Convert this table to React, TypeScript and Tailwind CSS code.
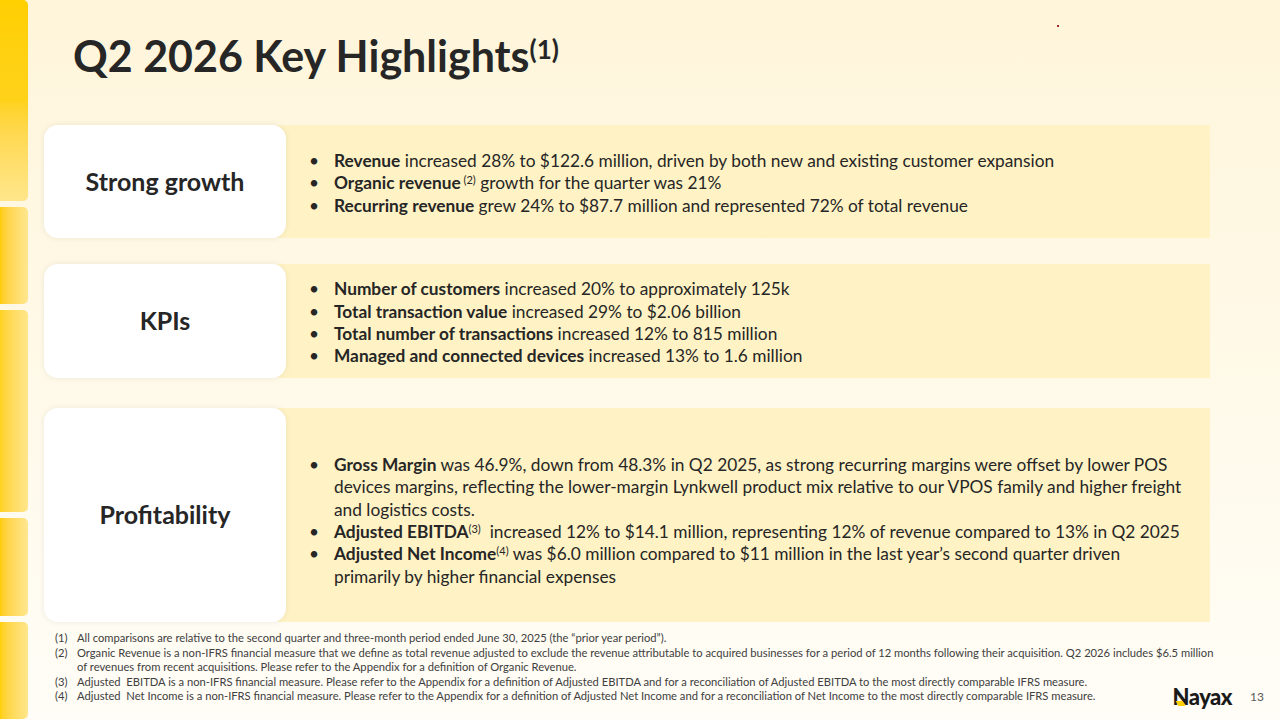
import type { ReactNode } from 'react'

const font = { fontFamily: 'Lato, "Open Sans", sans-serif' }

type Item = { lead: string; sup?: string; rest: string }

function Bullets({ items }: { items: Item[] }) {
  return (
    <ul className="flex flex-col">
      {items.map((it, i) => (
        <li key={i} className="flex text-[17.3px] leading-[22.3px] text-[#262626]">
          <span className="w-[25px] shrink-0">•</span>
          <span>
            <span className="font-bold">{it.lead}</span>
            {it.sup && <sup className="text-[11px] font-normal">{it.sup}</sup>}
            {it.rest}
          </span>
        </li>
      ))}
    </ul>
  )
}

function Row({ label, height, children }: { label: string; height: string; children: ReactNode }) {
  return (
    <div className={`flex ${height}`}>
      <div className="relative z-10 flex w-[242px] shrink-0 items-center justify-center rounded-[14px] bg-white shadow-[0_0_6px_rgba(0,0,0,0.08)]">
        <span className="text-[25px] font-bold text-[#262626]">{label}</span>
      </div>
      <div className="-ml-[8px] flex min-w-0 flex-1 items-center bg-[#fff2c4] pl-[31px] pr-[22px] pt-[4px]">{children}</div>
    </div>
  )
}

const notes: [string, string[]][] = [
  ['(1)', ['All comparisons are relative to the second quarter and three-month period ended June 30, 2025 (the “prior year period”).']],
  [
    '(2)',
    [
      'Organic Revenue is a non-IFRS financial measure that we define as total revenue adjusted to exclude the revenue attributable to acquired businesses for a period of 12 months following their acquisition. Q2 2026 includes $6.5 million',
      'of revenues from recent acquisitions. Please refer to the Appendix for a definition of Organic Revenue.',
    ],
  ],
  ['(3)', ['Adjusted  EBITDA is a non-IFRS financial measure. Please refer to the Appendix for a definition of Adjusted EBITDA and for a reconciliation of Adjusted EBITDA to the most directly comparable IFRS measure.']],
  ['(4)', ['Adjusted  Net Income is a non-IFRS financial measure. Please refer to the Appendix for a definition of Adjusted Net Income and for a reconciliation of Net Income to the most directly comparable IFRS measure.']],
]

export default function App() {
  return (
    <div
      className="relative flex h-[720px] w-[1280px] overflow-hidden bg-gradient-to-b from-[#fef5da] via-[#fff9e8] to-[#fffdf7]"
      style={font}
    >
      {/* left accent strip */}
      <div className="flex w-[28px] shrink-0 flex-col gap-[6px]">
        <div className="h-[201px] rounded-r-[5px] bg-gradient-to-b from-[#ffcf00] via-[#ffd21a] to-[#ffe68a]" />
        <div className="h-[97px] rounded-r-[5px] bg-gradient-to-r from-[#ffcd00] to-[#ffe78f]" />
        <div className="h-[202px] rounded-r-[5px] bg-gradient-to-r from-[#ffd21a] to-[#ffe68a]" />
        <div className="h-[98px] rounded-r-[5px] bg-gradient-to-r from-[#ffcd00] to-[#ffe78f]" />
        <div className="h-[97px] rounded-r-[5px] bg-gradient-to-r from-[#ffd000] to-[#ffe68a]" />
      </div>

      <div className="flex min-w-0 flex-1 flex-col pl-[16px] pr-[70px]">
        <h1 className="pl-[29px] pt-[31px] text-[43px] font-bold leading-[50px] text-[#262626]">
          Q2 2026 Key Highlights<sup className="text-[26px]">(1)</sup>
        </h1>

        <div className="mt-[44px] flex flex-col">
          <Row label="Strong growth" height="h-[113px]">
            <Bullets
              items={[
                { lead: 'Revenue', rest: ' increased 28% to $122.6 million, driven by both new and existing customer expansion' },
                { lead: 'Organic revenue', sup: ' (2)', rest: ' growth for the quarter was 21%' },
                { lead: 'Recurring revenue', rest: ' grew 24% to $87.7 million and represented 72% of total revenue' },
              ]}
            />
          </Row>
          <div className="h-[26px]" />
          <Row label="KPIs" height="h-[114px]">
            <Bullets
              items={[
                { lead: 'Number of customers', rest: ' increased 20% to approximately 125k' },
                { lead: 'Total transaction value', rest: ' increased 29% to $2.06 billion' },
                { lead: 'Total number of transactions', rest: ' increased 12% to 815 million' },
                { lead: 'Managed and connected devices', rest: ' increased 13% to 1.6 million' },
              ]}
            />
          </Row>
          <div className="h-[30px]" />
          <Row label="Profitability" height="h-[214px]">
            <div className="pt-[8px]">
              <Bullets
                items={[
                  {
                    lead: 'Gross Margin',
                    rest: ' was 46.9%, down from 48.3% in Q2 2025, as strong recurring margins were offset by lower POS devices margins, reflecting the lower-margin Lynkwell product mix relative to our VPOS family and higher freight and logistics costs.',
                  },
                  { lead: 'Adjusted EBITDA', sup: '(3)', rest: '\u00a0 increased 12% to $14.1 million, representing 12% of revenue compared to 13% in Q2 2025' },
                  {
                    lead: 'Adjusted Net Income',
                    sup: '(4)',
                    rest: ' was $6.0 million compared to $11 million in the last year’s second quarter driven primarily by higher financial expenses',
                  },
                ]}
              />
            </div>
          </Row>
        </div>

        <div className="mt-[9px] flex min-w-0 flex-col pl-[11px] text-[11.2px] leading-[14.6px] text-[#404040]">
          {notes.map(([n, lines]) => (
            <div key={n} className="flex">
              <span className="w-[22px] shrink-0">{n}</span>
              <div className="flex flex-col">
                {lines.map((l, i) => (
                  <span key={i} className="whitespace-pre">{l}</span>
                ))}
              </div>
            </div>
          ))}
        </div>
      </div>

      {/* stray marker */}
      <span className="absolute left-[1057px] top-[25px] h-[2px] w-[2px] bg-[#9b2c2c]" />

      {/* footer logo */}
      <div className="absolute bottom-[12px] right-[16px] flex items-center gap-[18px]">
        <span className="relative text-[22px] font-black leading-[22px] tracking-[-0.5px] text-[#1a1a1a]">
          Nayax
          <span className="absolute bottom-[2px] left-[5px] h-[5px] w-[7px] skew-x-[30deg] bg-[#ffd000]" />
        </span>
        <span className="text-[12px] text-[#595959]">13</span>
      </div>
    </div>
  )
}
